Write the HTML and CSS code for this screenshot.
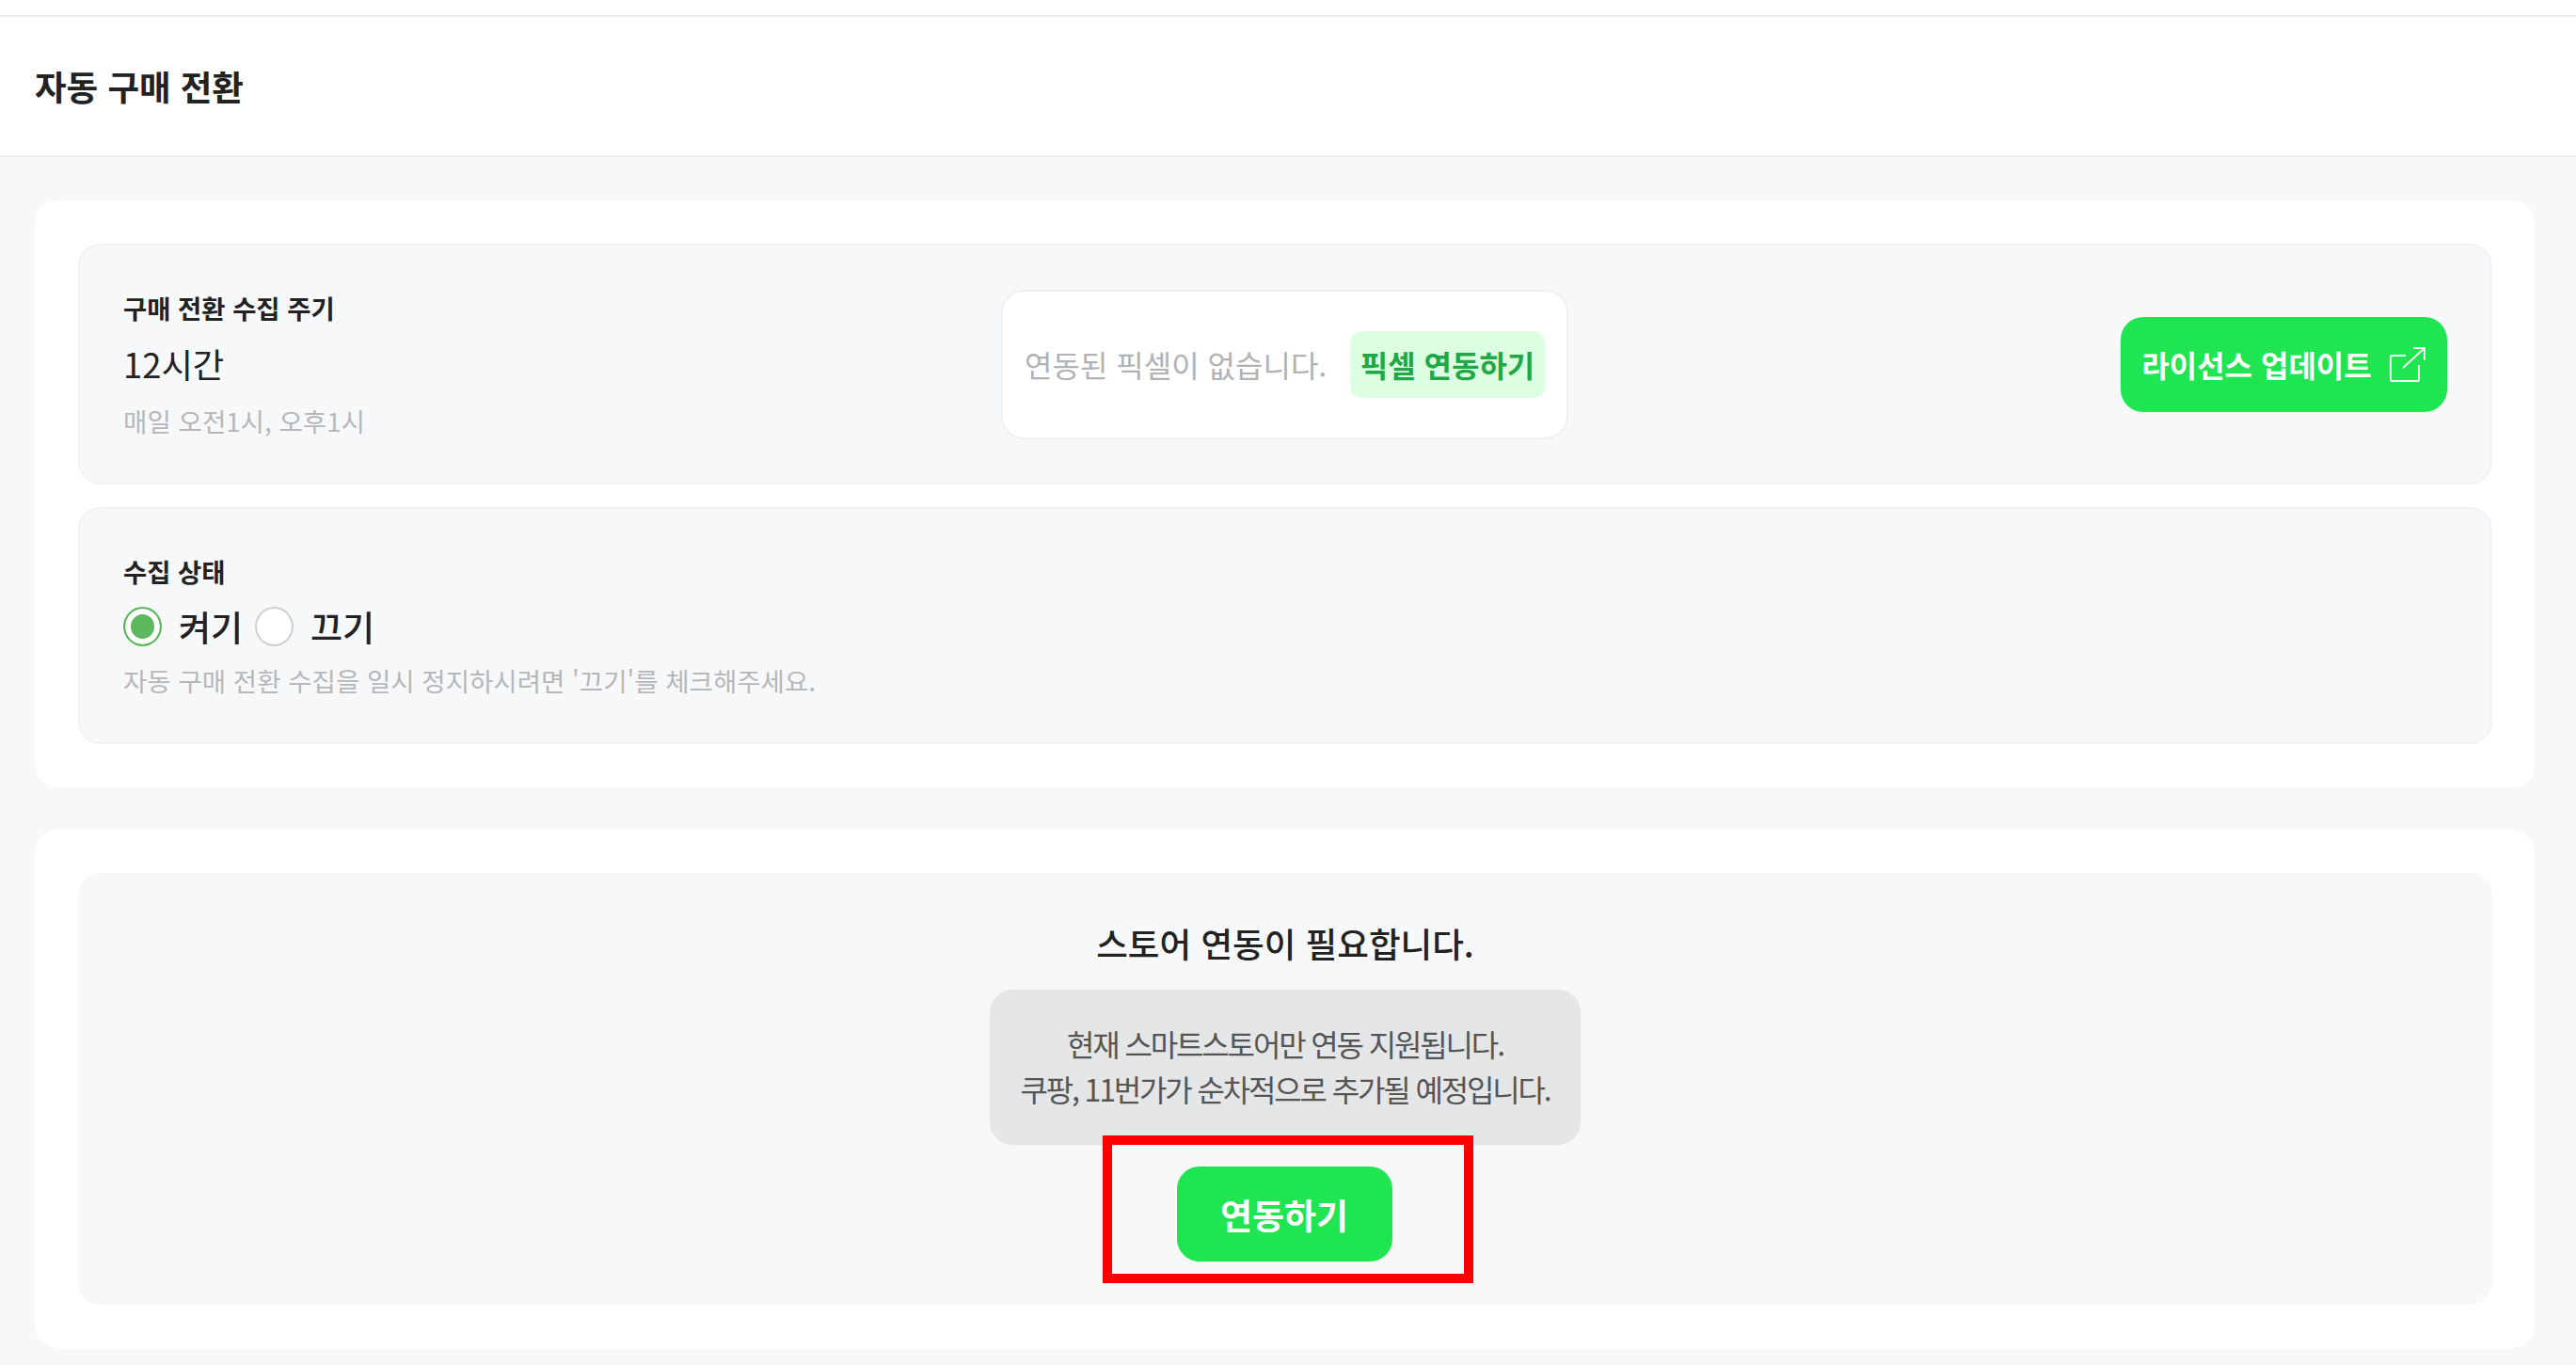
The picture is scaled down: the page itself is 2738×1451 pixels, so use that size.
FILE: index.html
```html
<!DOCTYPE html>
<html lang="ko">
<head>
    <meta charset="UTF-8">
    <title>자동 구매 전환</title>
    <link rel="stylesheet" href="styles.css">
</head>
<body>
    <div class="top-strip"></div>
    <header class="page-header">
        <h1>자동 구매 전환</h1>
    </header>

    <main class="content">
        <section class="card">
            <div class="panel panel-cycle">
                <div class="field">
                    <p class="field-label">구매 전환 수집 주기</p>
                    <p class="field-value">12시간</p>
                    <p class="field-hint">매일 오전1시, 오후1시</p>
                </div>
                <div class="pixel-box">
                    <span class="pixel-text">연동된 픽셀이 없습니다.</span>
                    <a class="pixel-link">픽셀 연동하기</a>
                </div>
                <a class="btn btn-license">
                    라이선스 업데이트
                    <svg class="icon-external" viewBox="0 0 39 38" fill="none" stroke="#fff" stroke-width="1.8">
                        <path d="M17 10H2a1 1 0 0 0-1 1v25a1 1 0 0 0 1 1h28a1 1 0 0 0 1-1V20"/>
                        <path d="M14 23L37 2M25 2h12v13"/>
                    </svg>
                </a>
            </div>

            <div class="panel panel-status">
                <p class="field-label">수집 상태</p>
                <div class="radio-row">
                    <span class="radio radio-on"></span>
                    <span class="radio-text">켜기</span>
                    <span class="radio"></span>
                    <span class="radio-text">끄기</span>
                </div>
                <p class="field-hint">자동 구매 전환 수집을 일시 정지하시려면 '끄기'를 체크해주세요.</p>
            </div>
        </section>

        <section class="card">
            <div class="panel panel-store">
                <h2>스토어 연동이 필요합니다.</h2>
                <div class="notice">
                    <p>현재 스마트스토어만 연동 지원됩니다.</p>
                    <p>쿠팡, 11번가가 순차적으로 추가될 예정입니다.</p>
                </div>
                <div class="connect-wrap">
                    <a class="btn btn-connect">연동하기</a>
                    <div class="highlight"></div>
                </div>
            </div>
        </section>
    </main>
</body>
</html>
```

FILE: styles.css
```css
* {
    box-sizing: border-box;
}

body {
    margin: 0;
    background: #f7f8f8;
    font-family: "Noto Sans CJK KR", "Noto Sans", sans-serif;
    color: #222;
}

p, h1, h2 {
    margin: 0;
}

.top-strip {
    height: 18px;
    background: #fff;
    border-bottom: 2px solid #eeeeee;
}

.page-header {
    height: 149px;
    padding-left: 37px;
    display: flex;
    align-items: center;
    background: #fff;
    border-bottom: 2px solid #eeeeee;
}

.page-header h1 {
    font-size: 36.5px;
    font-weight: 700;
}

.content {
    padding: 46px 44px 18px 37px;
    display: flex;
    flex-direction: column;
    gap: 45px;
}

.card {
    padding: 46px 45px 46px 46px;
    display: flex;
    flex-direction: column;
    gap: 24px;
    background: #fff;
    border-radius: 24px;
}

.panel {
    background: #f7f8fa;
    border: 2px solid #f1f2f3;
    border-radius: 24px;
}

.panel-cycle {
    height: 256px;
    padding: 0 46px;
    display: grid;
    grid-template-columns: 1fr auto 1fr;
    align-items: center;
}

.field-label {
    font-size: 27.4px;
    line-height: 36px;
    font-weight: 700;
}

.field-value {
    margin-top: 17px;
    font-size: 36.4px;
    line-height: 48px;
}

.field-hint {
    margin-top: 19px;
    font-size: 27.6px;
    line-height: 36px;
    color: #b5b7ba;
}

.pixel-box {
    width: 603px;
    height: 159px;
    margin-right: 1px;
    padding: 0 23px;
    display: flex;
    align-items: center;
    justify-content: space-between;
    background: #fff;
    border: 2px solid #f0f0f0;
    border-radius: 24px;
}

.pixel-text {
    font-size: 32px;
    color: #b0b2b6;
}

.pixel-link {
    height: 71px;
    width: 207px;
    display: flex;
    align-items: center;
    justify-content: center;
    background: #dcffe2;
    border-radius: 12px;
    font-size: 32px;
    font-weight: 700;
    color: #1fa845;
}

.btn {
    display: flex;
    align-items: center;
    justify-content: center;
    height: 101px;
    background: #1fe650;
    border-radius: 24px;
    color: #fff;
    font-weight: 700;
    font-size: 32px;
}

.btn-license {
    justify-self: end;
    width: 347px;
    gap: 19px;
}

.icon-external {
    width: 39px;
    height: 38px;
}

.panel-status {
    height: 252px;
    padding: 48px 46px 0;
}

.radio-row {
    margin-top: 14px;
    display: flex;
    align-items: center;
}

.radio {
    width: 41px;
    height: 42px;
    background: #fff;
    border: 2px solid #cfcfcf;
    border-radius: 50%;
}

.radio-on {
    background: #5cb85c;
    border: 2px solid #5cb85c;
    box-shadow: inset 0 0 0 6px #fff;
}

.radio-text {
    width: 99px;
    padding-left: 18px;
    font-size: 37px;
    font-weight: 500;
}

.panel-status .field-hint {
    margin-top: 12px;
    font-size: 27.55px;
}

.panel-store {
    height: 459px;
    padding-top: 46px;
    display: flex;
    flex-direction: column;
    align-items: center;
    border-color: #f7f8fa;
}

.panel-store h2 {
    font-size: 36.6px;
    line-height: 54px;
    font-weight: 500;
}

.notice {
    width: 628px;
    height: 165px;
    margin-top: 22px;
    padding-bottom: 4px;
    display: flex;
    flex-direction: column;
    justify-content: center;
    background: #e5e6e8;
    border-radius: 24px;
    text-align: center;
    font-size: 32px;
    line-height: 48px;
    letter-spacing: -2.15px;
    color: #555;
}

.connect-wrap {
    position: relative;
    width: 229px;
    margin-top: 23px;
    margin-right: 2px;
}

.btn-connect {
    font-size: 37px;
}

/* red box marking the button */
.highlight {
    position: absolute;
    top: -33px;
    bottom: -23px;
    left: -79px;
    right: -86px;
    border: 10px solid #fe0000;
}
```
